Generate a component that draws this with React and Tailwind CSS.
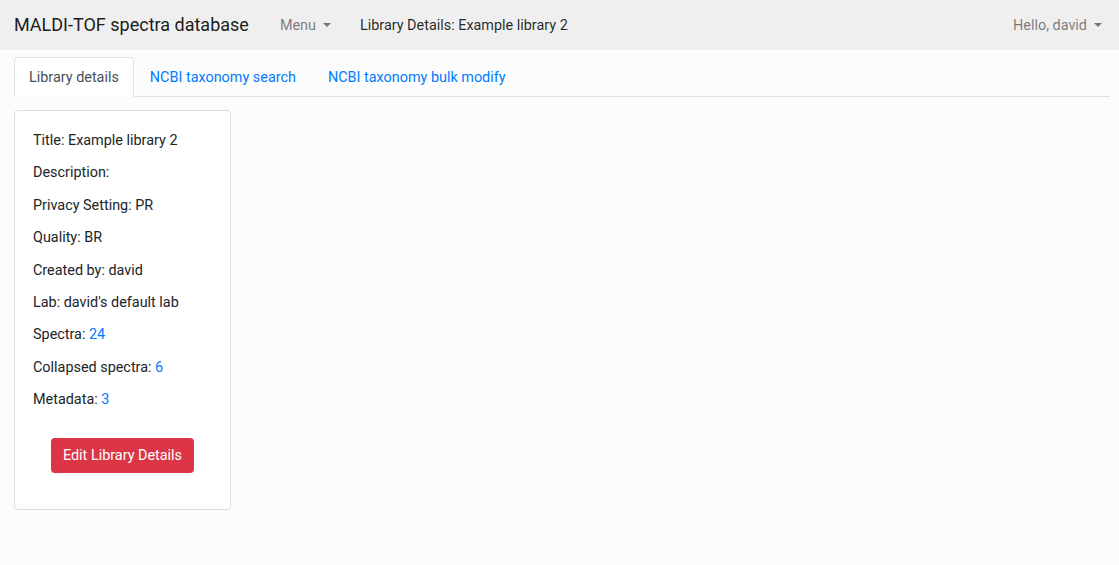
import React from "react";

function Caret() {
  return (
    <span className="ml-[7px] inline-block h-0 w-0 border-x-[4px] border-t-[4px] border-x-transparent border-t-current align-[3px]" />
  );
}

export default function App() {
  const rows = [
    ["Title: Example library 2"],
    ["Description:"],
    ["Privacy Setting: PR"],
    ["Quality: BR"],
    ["Created by: david"],
    ["Lab: david's default lab"],
    ["Spectra: ", "24"],
    ["Collapsed spectra: ", "6"],
    ["Metadata: ", "3"],
  ];

  return (
    <div className="min-h-[565px] bg-[#fcfcfc] font-['Roboto',sans-serif] text-[14.4px] text-[#212529]">
      <nav className="flex h-[50px] items-center bg-[#efefef] pl-[14px] pr-[17px] pt-[2px]">
        <span className="mb-[4px] text-[18px] text-[rgba(0,0,0,0.9)]">MALDI-TOF spectra database</span>
        <span className="ml-[31px] text-[rgba(0,0,0,0.5)]">
          Menu
          <Caret />
        </span>
        <span className="ml-[29px] text-[rgba(0,0,0,0.85)]">Library Details: Example library 2</span>
        <span className="ml-auto text-[rgba(0,0,0,0.5)]">
          Hello, david
          <Caret />
        </span>
      </nav>

      <div className="px-[14px] pt-[7px]">
        <ul className="mr-[-5px] flex border-b border-[#dee2e6]">
          <li className="-mb-px rounded-t-[4px] border border-[#dee2e6] border-b-white bg-white px-[14px] pt-[9px] pb-[7px] leading-[21px] text-[#495057]">
            Library details
          </li>
          <li className="border border-transparent px-[15px] pt-[9px] pb-[7px] leading-[21px] text-[#007bff]">
            NCBI taxonomy search
          </li>
          <li className="border border-transparent px-[15px] pt-[9px] pb-[7px] leading-[21px] text-[#007bff]">
            NCBI taxonomy bulk modify
          </li>
        </ul>

        <div className="mt-[13px] w-[217px] rounded-[4px] border border-[#dddddd] bg-white px-[18px] pt-[19px] pb-[36px]">
          <div className="flex flex-col gap-[11.4px]">
            {rows.map(([label, link]) => (
              <p key={label} className="leading-[21px]">
                {label}
                {link && <span className="text-[#007bff]">{link}</span>}
              </p>
            ))}
          </div>
          <div className="mt-[28px] flex justify-center">
            <button className="h-[35px] rounded-[4px] bg-[#dc3545] px-[12px] text-[14.4px] text-white">
              Edit Library Details
            </button>
          </div>
        </div>
      </div>
    </div>
  );
}
